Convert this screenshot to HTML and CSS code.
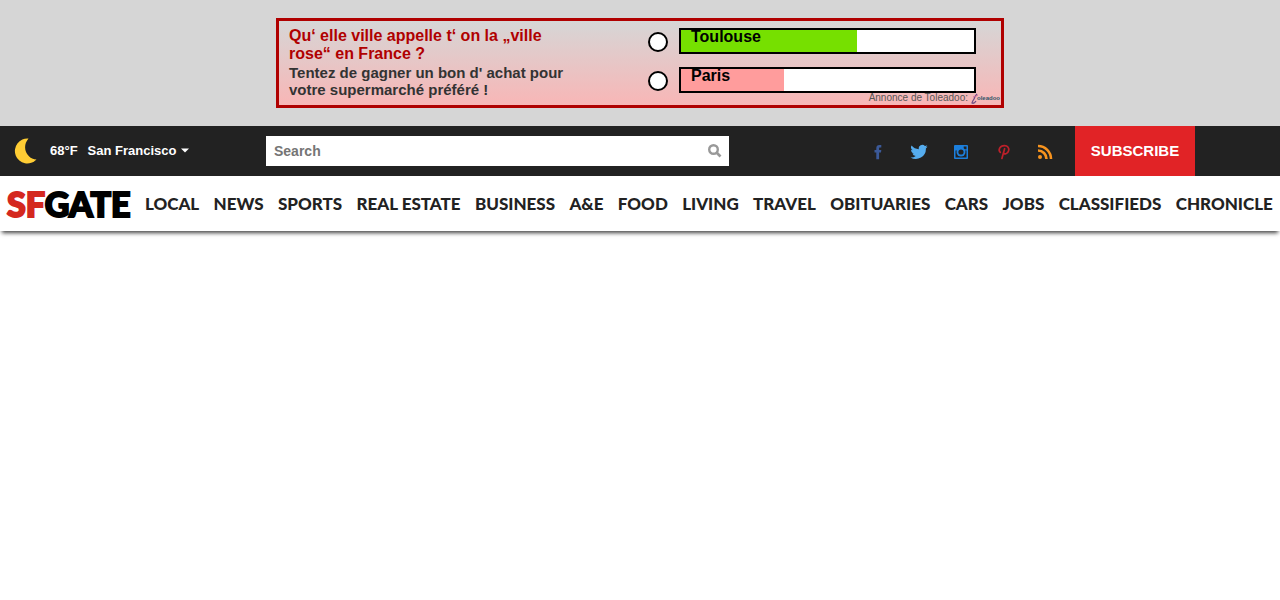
FILE: index.html
```html
<!DOCTYPE html>
<html lang="en">
<head>
<meta charset="utf-8">
<meta name="viewport" content="width=device-width, initial-scale=1">
<title>SFGATE</title>
<link rel="stylesheet" href="styles.css">
</head>
<body>
<aside class="ad-area" lang="fr">
  <form class="ad">
    <div class="ad-copy">
      <h2 class="ad-title">Qu‘ elle ville appelle t‘ on la „ville rose“ en France ?</h2>
      <p class="ad-text">Tentez de gagner un bon d' achat pour votre supermarché préféré !</p>
    </div>
    <div class="poll">
      <div class="option">
        <input class="option-radio" type="radio" name="city" id="toulouse">
        <label class="bar" for="toulouse"><span class="fill fill-green" style="width:60%">Toulouse</span></label>
      </div>
      <div class="option">
        <input class="option-radio" type="radio" name="city" id="paris">
        <label class="bar" for="paris"><span class="fill fill-pink" style="width:35%">Paris</span></label>
      </div>
    </div>
    <a class="ad-credit" href="#">Annonce de Toleadoo: <span class="ad-brand"><svg width="8" height="11" viewBox="0 0 8 11" aria-hidden="true"><path d="M6 1Q4 3 3 6Q1 9 1 10Q3 11 5 8" fill="none" stroke="#6d4c86" stroke-width="1.300"/><path d="M2 4Q4 4 7 2" fill="none" stroke="#d36d9b"/></svg>oleadoo</span></a>
  </form>
</aside>
<header>
  <div class="topbar">
    <div class="weather">
      <svg class="moon" width="24" height="26" viewBox="0 0 24 26" aria-hidden="true"><path d="M14.500 .5A12.500 12.500 0 1 0 22.500 21.500C14 21.500 6.500 10 14.500 .5Z" fill="#ffcd34"/></svg>
      <span>68°F</span>
      <button class="city" type="button">San Francisco<svg width="8" height="5" viewBox="0 0 8 5" aria-hidden="true"><path d="M0 .5H8L4 4.500Z" fill="#fff"/></svg></button>
    </div>
    <form class="search" role="search">
      <input class="search-input" type="text" placeholder="Search" aria-label="Search">
      <button class="search-button" type="button" aria-label="Submit search"><svg width="14" height="14" viewBox="0 0 14 14"><circle cx="5.500" cy="5.500" r="4.300" fill="none" stroke="#999" stroke-width="2.400"/><path d="M8.500 8.500L12.500 12.500" stroke="#999" stroke-width="2.600"/></svg></button>
    </form>
    <nav class="social" aria-label="Social">
      <a href="#" aria-label="Facebook"><svg width="18" height="16" viewBox="0 0 18 16"><path d="M8.300 15.200V8.500H6.500V5.900H8.300V4.300C8.300 2 9.500 1 11.400 1H13.300V3.600H12C11.300 3.600 11.100 4 11.100 4.600V5.900H13.300L13 8.500H11.100V15.200Z" fill="#3b5998"/></svg></a>
      <a href="#" aria-label="Twitter"><svg width="18" height="16" viewBox="0 0 24 20"><path d="M23.500 2.700a9.400 9.400 0 0 1-2.700.8A4.700 4.700 0 0 0 22.900.9a9.500 9.500 0 0 1-3 1.100 4.700 4.700 0 0 0-8.100 4.300A13.400 13.400 0 0 1 2.100 1.400a4.700 4.700 0 0 0 1.500 6.300 4.700 4.700 0 0 1-2.100-.6 4.700 4.700 0 0 0 3.800 4.700 4.800 4.800 0 0 1-2.100.1 4.700 4.700 0 0 0 4.400 3.300 9.500 9.500 0 0 1-7 2 13.400 13.400 0 0 0 20.600-12 9.500 9.500 0 0 0 2.300-2.500Z" fill="#55acee"/></svg></a>
      <a href="#" aria-label="Instagram"><svg width="18" height="16" viewBox="0 0 18 16"><rect x="2" y="1" width="14" height="14" rx="1" fill="#1c7fdc"/><path d="M3.500 6.500H14.500V13.500H3.500Z" fill="#222"/><rect x="11.700" y="2.500" width="2.800" height="2.800" fill="#222"/><circle cx="9" cy="8" r="4.500" fill="#1c7fdc"/><circle cx="9" cy="8" r="2.600" fill="#222"/></svg></a>
      <a href="#" aria-label="Pinterest"><svg width="18" height="16" viewBox="0 0 18 16"><path d="M6.300 8.300C3.800 6 5.800 1.800 10.300 1.700C13.800 1.600 15.400 4.100 14.600 6.800C13.700 10.200 10.300 10.500 9.400 9M10.600 4.700L7.900 14.500" fill="none" stroke="#bd202a" stroke-width="1.700" stroke-linecap="round"/></svg></a>
      <a href="#" aria-label="RSS"><svg width="18" height="16" viewBox="0 0 18 16"><circle cx="4" cy="13" r="2" fill="#f7931e"/><path d="M2 6.500A8.500 8.500 0 0 1 10.500 15M2 2A13 13 0 0 1 15 15" fill="none" stroke="#f7931e" stroke-width="2.600"/></svg></a>
    </nav>
    <a class="subscribe" href="#">SUBSCRIBE</a>
  </div>
  <nav class="mainnav" aria-label="Main">
    <a class="logo" href="#"><span class="logo-sf">SF</span>GATE</a>
    <a href="#">LOCAL</a>
    <a href="#">NEWS</a>
    <a href="#">SPORTS</a>
    <a href="#">REAL ESTATE</a>
    <a href="#">BUSINESS</a>
    <a href="#">A&amp;E</a>
    <a href="#">FOOD</a>
    <a href="#">LIVING</a>
    <a href="#">TRAVEL</a>
    <a href="#">OBITUARIES</a>
    <a href="#">CARS</a>
    <a href="#">JOBS</a>
    <a href="#">CLASSIFIEDS</a>
    <a href="#">CHRONICLE</a>
  </nav>
</header>
</body>
</html>
```

FILE: styles.css
```css
* {
  box-sizing: border-box;
}

body {
  min-height: 100vh;
  margin: 0;
  background: #fff;
  font-family: "Liberation Sans", Arial, sans-serif;
}

a {
  color: inherit;
  text-decoration: none;
}

button {
  border: 0;
  padding: 0;
  background: none;
  color: inherit;
  font: inherit;
}

svg {
  display: block;
}

.ad-area {
  padding: 18px 0;
  background: #d6d6d6;
}

.ad {
  position: relative;
  display: flex;
  justify-content: space-between;
  max-width: 728px;
  min-height: 90px;
  margin: 0 auto;
  padding: 6px 25px 4px 10px;
  border: 3px solid #b00000;
  background: linear-gradient(#d6d6d6, #f8b6b6);
}

.ad-copy {
  max-width: 290px;
}

.ad-title {
  margin: 0 0 1px;
  color: #b00000;
  font-size: 16px;
  line-height: 18px;
}

.ad-text {
  margin: 0;
  color: #333;
  font-size: 15px;
  font-weight: bold;
  line-height: 17px;
}

.poll {
  display: flex;
  flex-direction: column;
  gap: 13px;
  padding-top: 1px;
}

.option {
  display: flex;
  align-items: center;
  gap: 11px;
}

.option-radio {
  appearance: none;
  width: 20px;
  height: 20px;
  margin: 2px 0 0;
  border: 2px solid #000;
  border-radius: 50%;
  background: #fff;
}

.option-radio:checked {
  box-shadow: inset 0 0 0 4px #fff;
  background: #000;
}

.bar {
  width: 297px;
  height: 26px;
  border: 2px solid #000;
  background: #fff;
  font-size: 16px;
  font-weight: bold;
  line-height: 14px;
}

.fill {
  display: block;
  height: 100%;
  padding-left: 10px;
}

.fill-green {
  background: #76e000;
}

.fill-pink {
  background: #ff9c9c;
}

.ad-credit {
  position: absolute;
  right: 0;
  bottom: 1px;
  display: flex;
  gap: 3px;
  color: #555;
  font-size: 10px;
  line-height: 12px;
}

.ad-brand {
  display: flex;
  align-items: center;
  width: 30px;
  color: #2f5569;
  font-size: 6px;
  font-weight: bold;
}

.ad-brand svg {
  flex: none;
  margin-right: -2px;
}

.topbar {
  display: grid;
  grid-template-columns: 266px minmax(200px, 463px) 1fr 120px;
  height: 50px;
  padding-right: 85px;
  background: #222;
  color: #fff;
}

.weather {
  display: flex;
  align-items: center;
  gap: 10px;
  padding: 0 0 1px 14px;
  font-size: 13px;
  font-weight: bold;
}

.moon {
  margin-right: 2px;
}

.city {
  display: flex;
  align-items: center;
  gap: 5px;
}

.search {
  display: flex;
  align-self: center;
  height: 30px;
  background: #fff;
}

.search-input {
  flex: 1;
  min-width: 0;
  padding: 0 8px;
  border: 0;
  background: none;
  font: bold 14px "Liberation Sans", Arial, sans-serif;
}

.search-input::placeholder {
  color: #757575;
}

.search-button {
  width: 29px;
  padding-left: 8px;
}

.social {
  display: flex;
  align-items: center;
  justify-content: flex-end;
  gap: 24px;
  padding: 1px 21px 0 0;
}

.subscribe {
  display: flex;
  align-items: center;
  justify-content: center;
  padding-bottom: 2px;
  background: #e12326;
  font-size: 15px;
  font-weight: bold;
}

.mainnav {
  display: flex;
  align-items: center;
  justify-content: space-between;
  height: 55px;
  padding: 0 7px;
  box-shadow: 0 4px 4px -2px #444;
  color: #222;
  font: 900 17px Lato, sans-serif;
  white-space: nowrap;
}

.logo {
  color: #000;
  font-size: 34px;
  -webkit-text-stroke: 2px currentColor;
}

.logo-sf {
  color: #d4281f;
}
```
